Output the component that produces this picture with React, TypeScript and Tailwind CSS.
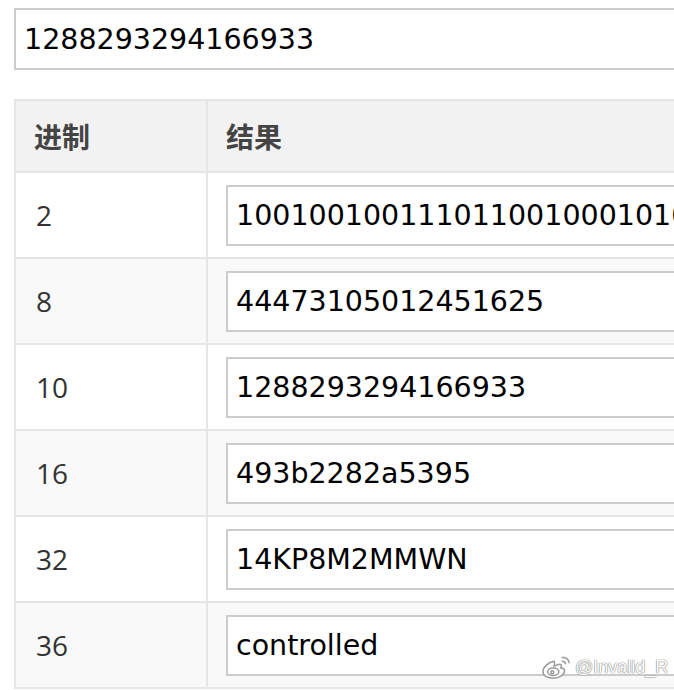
import React from 'react';

const rows = [
  { base: '2', value: '1001001001110110010001010000101001010011100110101' },
  { base: '8', value: '44473105012451625' },
  { base: '10', value: '1288293294166933' },
  { base: '16', value: '493b2282a5395' },
  { base: '32', value: '14KP8M2MMWN' },
  { base: '36', value: 'controlled' },
];

const inputFont = { fontFamily: '"DejaVu Sans", Verdana, sans-serif' };
const cjkFont = { fontFamily: '"Noto Sans CJK SC", sans-serif' };

const WeiboLogo: React.FC = () => (
  <svg width="32" height="28" viewBox="0 0 34 28" fill="none" stroke="#9a9a9a" strokeWidth="1.6">
    <path d="M14 8c-6 1-12 6-12 11 0 4 5 7 11 7 7 0 12-4 12-8 0-2-2-3-4-3 1-2 1-4-1-4-2 0-4 1-6 2 1-3 0-5 0-5z" fill="#fff" />
    <ellipse cx="13" cy="19" rx="6" ry="4" />
    <circle cx="12" cy="19.5" r="1.6" />
    <path d="M22 4c4-1 8 2 8 6" />
    <path d="M22 8c2 0 4 1 4 3" />
  </svg>
);

const App: React.FC = () => {
  return (
    <div className="relative w-[674px] h-[690px] overflow-hidden bg-white">
      <div className="w-[780px] pl-[14px] pt-[8px]">
        {/* number input */}
        <div
          className="h-[62px] border-2 border-[#cccccc] flex items-center px-[8px] pt-[2px] text-[28.5px] text-black"
          style={inputFont}
        >
          1288293294166933
        </div>

        {/* result table */}
        <div className="mt-[29px] border-2 border-[#e6e6e6]">
          <div className="grid grid-cols-[192px_1fr] bg-[#f2f2f2] h-[70px]">
            <div
              className="flex items-center pl-[18px] border-r-2 border-[#e6e6e6] text-[28px] font-bold text-[#444]"
              style={cjkFont}
            >
              进制
            </div>
            <div className="flex items-center pl-[18px] text-[28px] font-bold text-[#444]" style={cjkFont}>
              结果
            </div>
          </div>
          {rows.map((row, i) => (
            <div
              key={row.base}
              className={`grid grid-cols-[192px_1fr] h-[86px] border-t-2 border-[#e6e6e6] ${i % 2 === 1 ? 'bg-[#f9f9f9]' : 'bg-white'}`}
            >
              <div
                className="flex items-center pl-[20px] border-r-2 border-[#e6e6e6] text-[28px] text-[#333]"
                style={{ fontFamily: '"Open Sans", sans-serif' }}
              >
                {row.base}
              </div>
              <div className="flex items-center pl-[18px]">
                <div
                  className="w-full h-[61px] border-2 border-[#cccccc] bg-white flex items-center px-[8px] pt-[2px] text-[28.5px] text-black whitespace-nowrap overflow-hidden"
                  style={inputFont}
                >
                  {row.value}
                </div>
              </div>
            </div>
          ))}
        </div>
      </div>

      {/* watermark */}
      <div className="absolute left-[541px] top-[653px] flex items-center gap-[2px]">
        <WeiboLogo />
        <span
          className="text-[18px] text-white"
          style={{
            fontFamily: '"Liberation Sans", Arial, sans-serif',
            textShadow: '0 0 1px #888, 0 0 1px #888, 0 0 1px #888',
          }}
        >
          @Invalid_R
        </span>
      </div>
    </div>
  );
};

export default App;
